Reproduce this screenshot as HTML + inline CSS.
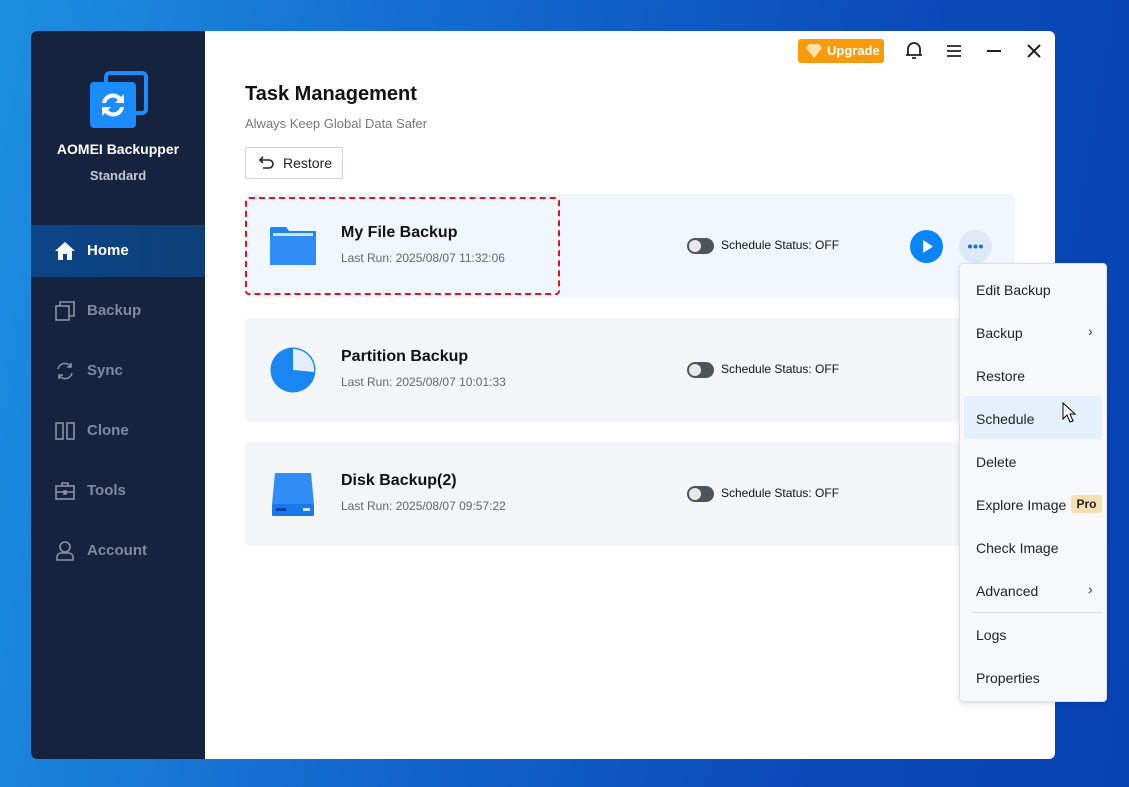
<!DOCTYPE html><html><head><style>
*{margin:0;padding:0;box-sizing:border-box}
body{width:1129px;height:787px;overflow:hidden;font-family:"Liberation Sans",sans-serif;background:linear-gradient(100deg,#1d8fe0 0%,#1266cc 40%,#0a48b8 75%,#0843b3 100%);position:relative}
.win{position:absolute;left:31px;top:31px;width:1024px;height:728px;background:#fff;border-radius:6px;overflow:hidden}
.side{position:absolute;left:0;top:0;width:174px;height:728px;background:#15233f}
.logo{position:absolute;left:59px;top:40px}
.brand{position:absolute;left:0;width:174px;text-align:center;color:#fff;font-weight:bold;font-size:14px}
.nav{position:absolute;left:0;width:174px;height:52px;color:#7f8aa0;font-weight:bold;font-size:15px;line-height:52px;padding-left:56px}
.nav svg{position:absolute;left:24px;top:16px}
.nav.act{background:linear-gradient(90deg,#0c4586,#0e3f7a);color:#fff}
.t{position:absolute;white-space:nowrap}
.card{position:absolute;left:214px;width:770px;height:104px;border-radius:4px;background:#f4f5f7}
.nm{position:absolute;left:96px;top:30px;font-weight:bold;font-size:16px;color:#111}
.lr{position:absolute;left:96px;top:57px;font-size:12px;color:#666}
.sw{position:absolute;left:442px;top:44px;width:27px;height:16px;border-radius:8px;background:#4f545c}
.sw:after{content:"";position:absolute;left:2px;top:2px;width:12px;height:12px;border-radius:6px;background:#e8e8e8}
.ss{position:absolute;left:476px;top:44px;font-size:12px;color:#111}
.menu{position:absolute;left:959px;top:263px;width:148px;height:439px;background:#f7f8fa;border:1px solid #dcdfe3;border-radius:4px;box-shadow:0 2px 6px rgba(0,0,0,.12)}
.mi{position:absolute;left:16px;font-size:14px;color:#222}
.ch{position:absolute;left:128px;font-size:14px;color:#333}
</style></head><body>
<div class="win">
<div class="side">
<svg class="logo" width="58" height="58" viewBox="0 0 58 58"><rect x="16" y="2" width="40" height="40" rx="4" fill="none" stroke="#1a8cff" stroke-width="4"/><rect x="0" y="11" width="46" height="46" rx="4" fill="#1a8cff"/><path d="M12 32a11 11 0 0 1 19-6l3-3v9h-9l3-3a7 7 0 0 0-12 3z" fill="#fff"/><path d="M34 36a11 11 0 0 1-19 6l-3 3v-9h9l-3 3a7 7 0 0 0 12-3z" fill="#fff"/></svg>
<div class="brand" style="top:110px">AOMEI Backupper</div>
<div class="brand" style="top:137px;color:#c2c8d3;font-size:13px">Standard</div>
<div class="nav act" style="top:194px"><svg width="20" height="20" viewBox="0 0 20 20"><path d="M10 1L0 10h3v9h5v-6h4v6h5v-9h3z" fill="#fff"/></svg>Home</div>
<div class="nav" style="top:254px"><svg width="20" height="20" viewBox="0 0 20 20" fill="none" stroke="#8a93a6" stroke-width="1.6"><rect x="1" y="5" width="13" height="14"/><path d="M5 5V1h14v14h-5"/></svg>Backup</div>
<div class="nav" style="top:314px"><svg width="20" height="20" viewBox="0 0 20 20" fill="none" stroke="#8a93a6" stroke-width="1.6"><path d="M3 8a7 7 0 0 1 13-2M17 12a7 7 0 0 1-13 2"/><path d="M16 2v4h-4M4 18v-4h4"/></svg>Sync</div>
<div class="nav" style="top:374px"><svg width="20" height="20" viewBox="0 0 20 20" fill="none" stroke="#8a93a6" stroke-width="1.6"><rect x="1" y="2" width="7" height="16"/><rect x="12" y="2" width="7" height="16"/></svg>Clone</div>
<div class="nav" style="top:434px"><svg width="20" height="20" viewBox="0 0 20 20" fill="none" stroke="#8a93a6" stroke-width="1.6"><rect x="1" y="5" width="18" height="13"/><path d="M7 5V2h6v3M1 11h18"/><rect x="9" y="10" width="2" height="3" fill="#8a93a6"/></svg>Tools</div>
<div class="nav" style="top:494px"><svg width="20" height="20" viewBox="0 0 20 20" fill="none" stroke="#8a93a6" stroke-width="1.6"><circle cx="10" cy="6" r="5"/><path d="M2 19v-3a4 4 0 0 1 4-4h8a4 4 0 0 1 4 4v3z"/></svg>Account</div>
</div>
<div class="t" style="left:767px;top:8px;width:86px;height:24px;background:#fb9b0c;border-radius:3px;color:#fff;font-weight:bold;font-size:13px;line-height:24px;padding-left:29px">Upgrade</div>
<svg style="position:absolute;left:775px;top:13px" width="16" height="14" viewBox="0 0 16 14"><path d="M3 0h10l3 4-8 10L0 4z" fill="#ffe3a6"/></svg>
<svg style="position:absolute;left:874px;top:10px" width="18" height="20" viewBox="0 0 18 20" fill="none" stroke="#222" stroke-width="1.8"><path d="M3 14V8a6 6 0 0 1 12 0v6h2H1z"/><path d="M7 17h4"/></svg>
<svg style="position:absolute;left:916px;top:13px" width="14" height="14"><path d="M0 2h14M0 7h14M0 12h14" stroke="#222" stroke-width="1.8"/></svg>
<svg style="position:absolute;left:956px;top:13px" width="14" height="14"><path d="M0 7h14" stroke="#222" stroke-width="2"/></svg>
<svg style="position:absolute;left:996px;top:13px" width="14" height="14"><path d="M1 1l12 12M13 1L1 13" stroke="#222" stroke-width="2"/></svg>
<div class="t" style="left:214px;top:52px;font-weight:bold;font-size:20px;color:#111">Task Management</div>
<div class="t" style="left:214px;top:85px;font-size:13px;color:#777">Always Keep Global Data Safer</div>
<div class="t" style="left:214px;top:116px;width:98px;height:32px;border:1px solid #cfd3d9;border-radius:2px;font-size:14px;color:#222;line-height:30px;padding-left:37px">Restore</div>
<svg style="position:absolute;left:228px;top:125px" width="16" height="14" fill="none" stroke="#222" stroke-width="1.6"><path d="M4 1L1 4l3 3M1 4h9a4 4 0 0 1 0 8H4"/></svg>
<div class="card" style="top:163px;background:#f0f7fe">
<svg style="position:absolute;left:25px;top:33px" width="46" height="38" viewBox="0 0 46 38"><path d="M0 2a2 2 0 0 1 2-2h14l3 4h27v34H0z" fill="#1a86f2"/><rect x="3" y="6" width="40" height="3" fill="#cfe3ff"/><rect x="0" y="9" width="46" height="29" fill="#2f8df5"/></svg>
<div class="nm">My File Backup</div><div class="lr">Last Run: 2025/08/07 11:32:06</div>
<div class="sw"></div><div class="ss">Schedule Status: OFF</div>
<div style="position:absolute;left:665px;top:36px;width:33px;height:33px;border-radius:50%;background:#0a84ff"><svg width="33" height="33"><path d="M13 10l10 6.5-10 6.5z" fill="#fff"/></svg></div>
<div style="position:absolute;left:714px;top:36px;width:33px;height:33px;border-radius:50%;background:#dde9f7"><svg width="33" height="33" fill="#1a6fd6"><circle cx="11" cy="16.5" r="2"/><circle cx="16.5" cy="16.5" r="2"/><circle cx="22" cy="16.5" r="2"/></svg></div>
</div>
<div style="position:absolute;left:214px;top:166px;width:315px;height:98px;border:2.5px dashed #e8101a;border-radius:4px"></div>
<div class="card" style="top:287px">
<svg style="position:absolute;left:25px;top:29px" width="46" height="46" viewBox="0 0 46 46"><circle cx="23" cy="23" r="22.5" fill="#1a86f2"/><path d="M23 23V2a21 21 0 0 1 21 23z" fill="#e4eefb"/></svg>
<div class="nm">Partition Backup</div><div class="lr">Last Run: 2025/08/07 10:01:33</div>
<div class="sw"></div><div class="ss">Schedule Status: OFF</div></div>
<div class="card" style="top:411px">
<svg style="position:absolute;left:27px;top:31px" width="42" height="43" viewBox="0 0 42 43"><path d="M3 0h36l3 31H0z" fill="#2f8df5"/><rect x="0" y="31" width="42" height="12" rx="1" fill="#1a78ea"/><rect x="4" y="35" width="10" height="3" fill="#0a3fa8"/><rect x="31" y="35" width="7" height="3" fill="#cfe3ff"/></svg>
<div class="nm">Disk Backup(2)</div><div class="lr">Last Run: 2025/08/07 09:57:22</div>
<div class="sw"></div><div class="ss">Schedule Status: OFF</div></div>
</div>
<div class="menu">
<div style="position:absolute;left:4px;top:132px;width:138px;height:43px;background:#e6f0fc;border-radius:3px"></div>
<div class="mi" style="top:18px">Edit Backup</div>
<div class="mi" style="top:61px">Backup</div><div class="ch" style="top:59px">›</div>
<div class="mi" style="top:104px">Restore</div>
<div class="mi" style="top:147px">Schedule</div>
<div class="mi" style="top:190px">Delete</div>
<div class="mi" style="top:233px">Explore Image</div>
<div style="position:absolute;left:111px;top:231px;width:31px;height:18px;background:#f6dfb0;border-radius:3px;font-size:12px;font-weight:bold;color:#222;text-align:center;line-height:18px">Pro</div>
<div class="mi" style="top:276px">Check Image</div>
<div class="mi" style="top:319px">Advanced</div><div class="ch" style="top:317px">›</div>
<div style="position:absolute;left:12px;top:348px;width:130px;height:1px;background:#dcdfe3"></div>
<div class="mi" style="top:363px">Logs</div>
<div class="mi" style="top:406px">Properties</div>
</div>
<svg style="position:absolute;left:1062px;top:402px" width="14" height="22"><path d="M1 1v16l4-4 3 7 3-1-3-7h5z" fill="#fff" stroke="#000" stroke-width="1"/></svg>
</body></html>
